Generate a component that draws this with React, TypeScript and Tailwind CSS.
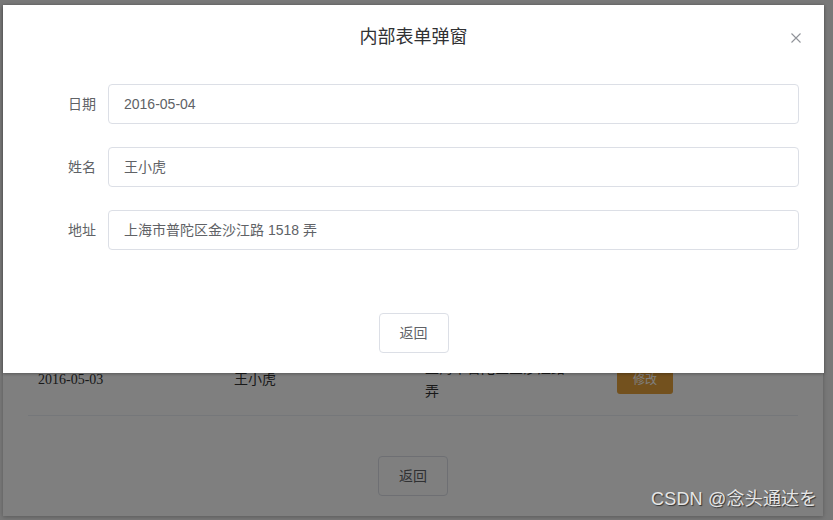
import React from "react";

const sans = { fontFamily: '"Liberation Sans", "Noto Sans CJK SC", sans-serif' };
const serif = { fontFamily: '"Liberation Serif", "Noto Sans CJK SC", serif' };

function Field({ label, value }: { label: string; value: string }) {
  return (
    <div className="flex items-center h-[40px]">
      <div className="w-[105px] shrink-0 pr-3 text-right text-[14px] text-[#606266]">{label}</div>
      <div className="flex-1 h-[40px] mr-[25px] border border-[#dcdfe6] rounded-[4px] flex items-center pl-[15px] text-[14px] text-[#606266]">
        {value}
      </div>
    </div>
  );
}

export default function App() {
  return (
    <div className="relative w-[833px] h-[520px] overflow-hidden bg-[#f0f0f0]" style={sans}>
      {/* background page */}
      <div className="pl-[3px] pr-[10px] pt-[5px]">
        <div className="h-[511px] bg-white shadow-[0_1px_4px_rgba(0,0,0,0.25)] px-[25px] pt-[340px]">
          <div className="grid grid-cols-[196px_191px_192px_1fr] border-b border-[#ebeef5] py-[12px] items-center text-[14px] text-[#333]" style={serif}>
            <div className="px-[10px] leading-[22px]">2016-05-03</div>
            <div className="px-[10px] leading-[22px]">王小虎</div>
            <div className="px-[10px] leading-[23px]">
              上海市普陀区金沙江路 1518
              <br />弄
            </div>
            <div className="px-[10px]">
              <div className="w-[56px] h-[28px] rounded-[3px] bg-[#e6a23c] text-white text-[12px] flex items-center justify-center" style={sans}>
                修改
              </div>
            </div>
          </div>
          <div className="flex justify-center pt-[40px]">
            <div className="w-[70px] h-[40px] border border-[#dcdfe6] rounded-[4px] bg-white flex items-center justify-center text-[14px] text-[#606266]">
              返回
            </div>
          </div>
        </div>
      </div>

      {/* overlay */}
      <div className="absolute inset-0 bg-black/50" />

      {/* dialog */}
      <div className="absolute left-[3px] top-[5px] w-[821px] h-[368px] bg-white shadow-[0_1px_3px_rgba(0,0,0,0.3)]">
        <div className="relative pt-[20px] pb-[5px] h-[49px]">
          <div className="text-center text-[18px] leading-[24px] text-[#303133]">内部表单弹窗</div>
          <svg className="absolute left-[788px] top-[28px]" width="10" height="10" viewBox="0 0 10 10">
            <path d="M0.5 0.5 L9.5 9.5 M9.5 0.5 L0.5 9.5" stroke="#909399" strokeWidth="1.1" fill="none" />
          </svg>
        </div>
        <div className="pt-[30px] flex flex-col gap-[23px]">
          <Field label="日期" value="2016-05-04" />
          <Field label="姓名" value="王小虎" />
          <Field label="地址" value="上海市普陀区金沙江路 1518 弄" />
        </div>
        <div className="flex justify-center pt-[63px]">
          <div className="w-[70px] h-[40px] border border-[#dcdfe6] rounded-[4px] bg-white flex items-center justify-center text-[14px] text-[#606266]">
            返回
          </div>
        </div>
      </div>

      {/* watermark */}
      <div
        className="absolute left-[651px] top-[486px] text-[18px] leading-[26px] tracking-[0.2px] text-[#e6e6e6] [text-shadow:1px_1px_1px_rgba(0,0,0,0.6)]"
        style={sans}
      >
        CSDN @念头通达を
      </div>
    </div>
  );
}
